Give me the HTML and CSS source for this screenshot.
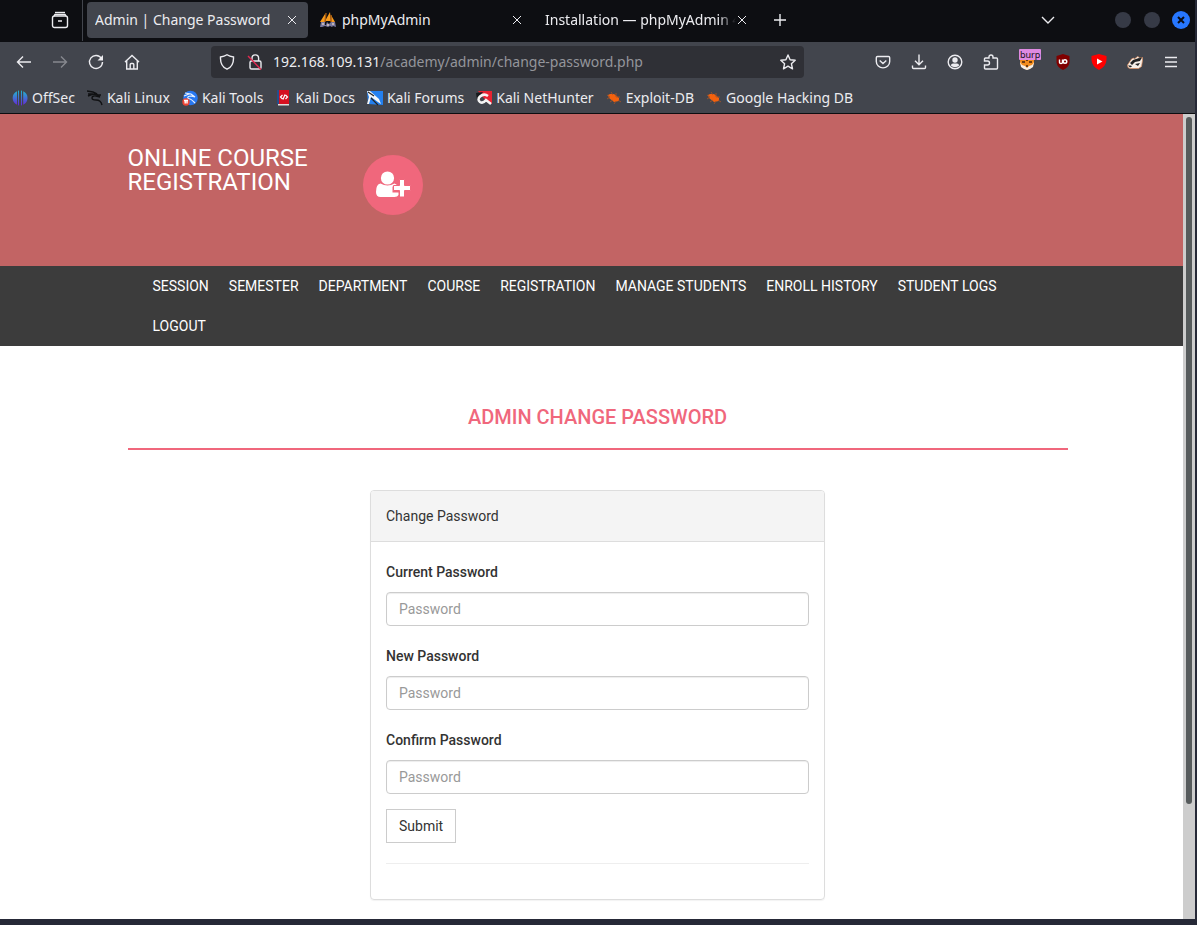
FILE: index.html
```html
<!DOCTYPE html>
<html lang="en">
<head>
<meta charset="utf-8">
<title>Admin | Change Password</title>
<link rel="stylesheet" href="styles.css">
</head>
<body>
<div class="window">
  <header class="browser">
    <div class="tabbar">
      <button class="recent" aria-label="View recent tabs"><svg class="icon" viewBox="0 0 18 18"><path d="M4 1.500h10"/><rect x="1.500" y="5" width="15" height="11.500" rx="2"/><path d="M3 5l1-1.500h10l1 1.500M7 10h4"/></svg></button>
      <div class="tab active"><span class="tab-title">Admin | Change Password</span><button class="close" aria-label="Close tab"><svg viewBox="0 0 10 10"><path d="M1 1l8 8M9 1l-8 8"/></svg></button></div>
      <div class="tab">
        <svg class="favicon" viewBox="0 0 16 16"><path d="M5 2v8H0zM10 0l1 9H5zM11 3l4 7h-4z" fill="#f89b1c"/><path d="M6 1L5 10M11 3v7" stroke="#a75c12" fill="none"/><path d="M0 15l1-5h4v3h1l1-3 2 2 2-2h4l1 5-3-1-1 1-2-1-2 1-3-1-3 1z" fill="#77779e"/><path d="M2 12h2M7 13h2M12 12h2" stroke="#d9c7bb" fill="none"/></svg>
        <span class="tab-title">phpMyAdmin</span><button class="close" aria-label="Close tab"><svg viewBox="0 0 10 10"><path d="M1 1l8 8M9 1l-8 8"/></svg></button></div>
      <div class="tab"><span class="tab-title fade">Installation — phpMyAdmin 4</span><button class="close" aria-label="Close tab"><svg viewBox="0 0 10 10"><path d="M1 1l8 8M9 1l-8 8"/></svg></button></div>
      <button class="newtab" aria-label="New tab"><svg viewBox="0 0 12 12"><path d="M6 0v12M0 6h12"/></svg></button>
      <button class="alltabs" aria-label="List all tabs"><svg viewBox="0 0 14 8"><path d="M1 1l6 6 6-6"/></svg></button>
      <div class="controls">
        <button class="dot" aria-label="Minimize"></button>
        <button class="dot" aria-label="Maximize"></button>
        <button class="dot dot-close" aria-label="Close"><svg viewBox="0 0 8 8"><path d="M1 1l6 6M7 1L1 7"/></svg></button>
      </div>
    </div>
    <div class="toolbar">
      <div class="nav-buttons">
        <button aria-label="Back"><svg class="icon" viewBox="0 0 16 16"><path d="M15 8H1.500M7 2.500L1.500 8 7 13.500"/></svg></button>
        <button class="disabled" aria-label="Forward" disabled><svg class="icon" viewBox="0 0 16 16"><path d="M1 8h13.500M9 2.500L14.500 8 9 13.500"/></svg></button>
        <button aria-label="Reload"><svg class="icon" viewBox="0 0 16 16"><path d="M13.500 4.500A6.500 6.500 0 1 0 14.500 8"/><path d="M15 1v5.500H9.500z" fill="currentColor" stroke="none"/></svg></button>
        <button aria-label="Home"><svg class="icon" viewBox="0 0 16 16"><path d="M1 8l7-6.500L15 8M2.700 6.500V15h10.600V6.500M6.200 15v-4.500q0-1 1-1h1.600q1 0 1 1V15"/></svg></button>
      </div>
      <div class="urlbar">
        <svg class="icon" viewBox="0 0 16 16"><path d="M8 .8c2 1.400 4.500 2 6.500 2.200.3 5.500-1.500 10-6.500 12.200C3 13 1.200 8.500 1.500 3 3.500 2.800 6 2.200 8 .800z"/></svg>
        <svg class="icon" viewBox="0 0 16 16"><rect x="3" y="7" width="11" height="8" rx="1.500"/><path d="M5 7V4.200a3.300 3.300 0 0 1 6.600 0V7"/><path d="M1 2l13 13.500" stroke="#e22850"/></svg>
        <p class="url"><span>192.168.109.131</span>/academy/admin/change-password.php</p>
        <svg class="icon" viewBox="0 0 16 16"><path d="M8 1l2.100 4.700 5.100.5-3.800 3.500 1.100 5.100L8 12.200l-4.500 2.600 1.100-5.100L.8 6.200l5.100-.5z" stroke-linejoin="round"/></svg>
      </div>
      <div class="extensions">
        <button aria-label="Pocket"><svg class="icon" viewBox="0 0 16 16"><path d="M2.500 2.500h11q1.200 0 1.200 1.200V7.500a6.700 6.400 0 0 1-13.400 0V3.700q0-1.200 1.200-1.200zM4.700 6.500L8 9.500l3.300-3"/></svg></button>
        <button aria-label="Downloads"><svg class="icon" viewBox="0 0 16 16"><path d="M8 .5v10M4 6.800l4 4 4-4M1.500 11.500v2q0 1 1 1h11q1 0 1-1v-2"/></svg></button>
        <button aria-label="Account"><svg class="icon" viewBox="0 0 16 16"><circle cx="8" cy="8" r="6.800"/><circle cx="8" cy="6" r="2.700" fill="currentColor" stroke="none"/><path d="M3.800 11.500Q4.200 9.500 6 9.500h4q1.800 0 2.200 2A6 6 0 0 1 3.800 11.500z" fill="currentColor" stroke="none"/></svg></button>
        <button aria-label="Extensions"><svg class="icon" viewBox="0 0 16 16"><path d="M1.500 7V5q0-1 1-1H6V3a2 2 0 0 1 4 0v1h3.500q1 0 1 1v9q0 1-1 1h-11q-1 0-1-1v-3h3a2 2 0 0 0 0-4z"/></svg></button>
        <button class="badged" aria-label="Proxy switcher"><svg class="icon solid" viewBox="0 0 16 16"><path d="M1 4l3 1 4-1 4 1 3-1v6l-3 4-4 2-4-2-3-4z" fill="#f28c1c"/><path d="M1 8l2 3 3 1 2 2 2-2 3-1 2-3-1 5-3 2-3 1-3-1-3-2z" fill="#f5eee5"/><path d="M7 5h2v2H7zM3 7h3v2H3zM10 7h3v2h-3zM7 11h2v2H7z" fill="#703d10"/></svg><span class="badge">burp</span></button>
        <button aria-label="uBlock Origin"><svg class="icon solid" viewBox="0 0 16 16"><path d="M8 0l6.500 2v6.500Q14 13 8 16 2 13 1.500 8.500V2z" fill="#800000"/><path d="M4.500 5.500v3q0 1 1.500 1t1.500-1v-3" stroke="#fff" fill="none"/><circle cx="10" cy="7.500" r="1.800" stroke="#fff" fill="none"/></svg></button>
        <button aria-label="Video blocker"><svg class="icon solid" viewBox="0 0 16 16"><path d="M8 0l7.500 2v4Q15 12.500 8 16 1 12.500.5 6V2z" fill="#f00"/><path d="M6 4.500l5.500 3L6 10.500z" fill="#fff"/></svg></button>
        <button aria-label="Privacy Badger"><svg class="icon solid" viewBox="0 0 16 16"><path d="M.5 11l4-6 2-1 1 1 3-2.500 2 1h3v3l-1 6-3 2H3l-2-1z" fill="#f7efe8" stroke="#dc8c5c" stroke-width=".7"/><path d="M3 9l3-3 6-2 2 1-1 2-5 1-3 3zM1 11.500h3l1 1-2 1zM8 10l5-1-2 3zM12 3.500l3 0-1 2z" fill="#222"/></svg></button>
        <button aria-label="Menu"><svg class="icon" viewBox="0 0 16 16"><path d="M2 3.500h12M2 8h12M2 12.500h12"/></svg></button>
      </div>
    </div>
    <nav class="bookmarks" aria-label="Bookmarks">
      <a href="#"><svg viewBox="0 0 16 16"><defs><linearGradient id="g" x2="0" y2="1"><stop stop-color="#20b8cf"/><stop offset="1" stop-color="#6626d9"/></linearGradient></defs><path d="M5 1.200v13.600A7.500 7.500 0 0 1 5 1.200zM7 .5v15l-1-.3V.8zM9 .5v15l1-.3V.8zM11.200 1.200v13.600a7.500 7.500 0 0 0 0-13.600z" fill="url(#g)"/></svg>OffSec</a>
      <a href="#"><svg viewBox="0 0 16 16"><path d="M0 1l6 1 4 2M1 4l5 0M1 6l5-2 4 .5 3 2.500-4-1Q5 5.500 5 8q0 2 4 2 5 0 6 5M10 5l4 0" fill="none" stroke="#101113" stroke-width="1.400"/></svg>Kali Linux</a>
      <a href="#"><svg viewBox="0 0 16 16"><circle cx="8.500" cy="8" r="7.300" fill="#2878f0"/><path d="M3 3l6 1 4 3-4-1q-4 0-3 2.500 3 0 7 4.500M2 6l5-2" fill="none" stroke="#e8f2ff" stroke-width="1.200"/><circle cx="4" cy="12" r="3.700" fill="#e43"/><path d="M2 10.500h4M3.200 10.500v3M5 10.500v3" stroke="#fff"/></svg>Kali Tools</a>
      <a href="#"><svg viewBox="0 0 16 16"><path d="M2 0h12v14H2z" fill="#d51020"/><path d="M2 0h2v14H2z" fill="#254d8c"/><path d="M3 14h11v1.500H3z" fill="#ddd"/><path d="M7.500 5L5.500 7l2 2M10.500 5l2 2-2 2M10 4.500L8 9.500" stroke="#fff" fill="none" stroke-width="1.200"/></svg>Kali Docs</a>
      <a href="#"><svg viewBox="0 0 16 16"><path d="M0 1h16v14L1 14z" fill="#2380ef"/><path d="M0 1h3l9 8 2 5-3-2-7-5-2 7-2 0 2-7z" fill="#f3f5f7"/><path d="M1 2l6 4M4 8l4 4 3 3" stroke="#222" stroke-width="1.200" fill="none"/></svg>Kali Forums</a>
      <a href="#"><svg viewBox="0 0 16 16"><path d="M2 1h14v13l-5-2z" fill="#e92332"/><path d="M0 3l7-1-6 8z" fill="#17191c"/><path d="M12 6Q8 3 4 6.500q-3 3 0 5.500 3 2 6-2l5 4" fill="none" stroke="#f4f4f4" stroke-width="2.500"/></svg>Kali NetHunter</a>
      <a href="#"><svg viewBox="0 0 16 16"><path d="M2 5l2-1 4 0 5 4 0 3-5 1-5-4z" fill="#f4610d"/><path d="M1 5l3 2-3 2M5 2l2 3M10 3v4l4 0M4 12l3-2M8 14l2-3M12 10l3 2" fill="none" stroke="#a95427" stroke-width=".8"/></svg>Exploit-DB</a>
      <a href="#"><svg viewBox="0 0 16 16"><path d="M2 5l2-1 4 0 5 4 0 3-5 1-5-4z" fill="#f4610d"/><path d="M1 5l3 2-3 2M5 2l2 3M10 3v4l4 0M4 12l3-2M8 14l2-3M12 10l3 2" fill="none" stroke="#a95427" stroke-width=".8"/></svg>Google Hacking DB</a>
    </nav>
  </header>

  <div class="viewport">
    <div class="page-header">
      <div class="container brand-row">
        <a class="brand" href="#">ONLINE COURSE REGISTRATION</a>
        <div class="avatar"><svg viewBox="0 0 36 28"><circle cx="12.500" cy="7" r="6.600" fill="#fff"/><path d="M5.500 12.500q3.500 2 7 2t7-2q2 .3 3.300 3H17.500v6h6v2.500q-1 2-4 2h-14q-4.500 0-4.500-5 0-8 4.500-8.500z" fill="#fff"/><path d="M24.500 8.500h5v6h6v5h-6v6.500h-5v-6.500h-6v-5h6z" fill="#fff" stroke="#f0677c"/></svg></div>
      </div>
    </div>
    <nav class="menu-section" aria-label="Admin">
      <ul class="container menu">
        <li><a href="#">SESSION</a></li><li><a href="#">SEMESTER</a></li><li><a href="#">DEPARTMENT</a></li><li><a href="#">COURSE</a></li><li><a href="#">REGISTRATION</a></li><li><a href="#">MANAGE STUDENTS</a></li><li><a href="#">ENROLL HISTORY</a></li><li><a href="#">STUDENT LOGS</a></li><li><a href="#">LOGOUT</a></li>
      </ul>
    </nav>
    <main class="container content">
      <h1>ADMIN CHANGE PASSWORD</h1>
      <section class="panel">
        <h2>Change Password</h2>
        <form class="panel-body">
          <div class="field"><label for="current">Current Password</label><input id="current" type="password" placeholder="Password"></div>
          <div class="field"><label for="new">New Password</label><input id="new" type="password" placeholder="Password"></div>
          <div class="field"><label for="confirm">Confirm Password</label><input id="confirm" type="password" placeholder="Password"></div>
          <button class="submit" type="submit">Submit</button>
          <hr>
        </form>
      </section>
    </main>
    <div class="scrollbar"><div class="thumb"></div></div>
  </div>
</div>
</body>
</html>
```
FILE: styles.css
```css
* { box-sizing: border-box; }
body { margin: 0; background: #262937; }
button { background: none; border: 0; padding: 0; color: inherit; font: inherit; display: flex; align-items: center; justify-content: center; }
a { color: inherit; text-decoration: none; }
svg { display: block; flex: none; }
.window { min-height: 100vh; display: flex; flex-direction: column; padding: 0 2px 6px 0; }

/* Browser chrome */
.browser { font: 14px/20px "Noto Sans", sans-serif; color: #ececf0; background: #42454d; border-bottom: 1px solid #0c0d10; }
.browser svg { fill: none; stroke: currentColor; stroke-width: 1.4; }
.browser .icon { width: 16px; height: 16px; }
.browser .solid { stroke: none; }
.tabbar { height: 42px; background: #0d0e12; display: flex; align-items: center; padding-bottom: 3px; }
.recent { width: 83px; height: 42px; padding-left: 37px; border-right: 1px solid #42454d; margin-right: 4px; }
.recent .icon { width: 18px; height: 18px; }
.tab { height: 36px; width: 225px; display: flex; align-items: center; padding: 0 8px; border-radius: 4px; white-space: nowrap; }
.tab:not(.active) { padding: 0 8px 0 12px; }
.tab.active { background: #42454d; width: 221px; }
.tab-title { flex: 1; min-width: 0; overflow: hidden; }
.fade { margin-right: -8px; mask-image: linear-gradient(to right, #000 88%, transparent 97%); }
.close { width: 16px; height: 16px; }
.close svg { width: 10px; height: 10px; stroke-width: 1; }
.browser .favicon { width: 16px; height: 16px; stroke: none; margin-right: 6px; }
.newtab { width: 36px; height: 36px; margin-left: 4px; }
.newtab svg { width: 12px; height: 12px; }
.alltabs { width: 36px; height: 36px; margin-left: auto; }
.alltabs svg { width: 14px; height: 8px; }
.controls { display: flex; align-items: center; gap: 13px; margin: 0 5px 0 49px; }
.dot { width: 16px; height: 16px; border-radius: 50%; background: #363a46; }
.dot-close { width: 18px; height: 18px; background: #2777ff; color: #0b0d14; margin-left: -1px; }
.dot-close svg { width: 8px; height: 8px; stroke-width: 2; }
.toolbar { height: 40px; display: flex; align-items: center; padding: 0 16px; }
.nav-buttons { display: flex; gap: 20px; }
.disabled { opacity: .4; }
.urlbar { flex: 1; max-width: 593px; height: 32px; margin-left: 71px; background: #2f3036; border-radius: 4px; display: flex; align-items: center; gap: 12px; padding: 0 8px; }
.url { flex: 1; margin: 0 0 0 -2px; color: #94959b; white-space: nowrap; overflow: hidden; }
.url span { color: #ececf0; }
.extensions { display: flex; gap: 20px; margin-left: auto; }
.badged { position: relative; }
.badge { position: absolute; left: 0; top: -5px; height: 11px; padding: 0 1px; background: #df8ae2; color: #15141a; font-size: 9px; line-height: 11px; border-radius: 1px; }
.bookmarks { height: 31px; display: flex; align-items: center; gap: 12px; padding: 0 12px; white-space: nowrap; }
.bookmarks a { display: flex; align-items: center; gap: 4px; }
.bookmarks svg { width: 16px; height: 16px; stroke: none; }

/* Web page */
.viewport { position: relative; flex: 1; background: #fff; font: 14px/30px Roboto, sans-serif; color: #333; }
.container { width: 100%; max-width: 970px; margin: 0 auto; padding: 0 15px; }
.page-header { background: #c26464; }
.brand-row { display: flex; gap: 20px; padding-top: 32px; min-height: 152px; }
.brand { width: 215px; color: #fff; font-size: 24px; line-height: 24px; }
.avatar { width: 60px; height: 60px; margin-top: 9px; border-radius: 50%; background: #f0677c; display: flex; align-items: center; justify-content: center; }
.avatar svg { width: 36px; height: 28px; }
.menu-section { background: #3c3c3c; color: #fff; }
.menu { list-style: none; display: flex; flex-wrap: wrap; padding: 0 30px; }
.menu a { display: block; padding: 0 10px; line-height: 40px; }
h1 { margin: 56px 0 40px; padding-bottom: 16px; border-bottom: 2px solid #f0677c; color: #f0677c; font-size: 20px; line-height: 30px; font-weight: 500; text-align: center; }
.content { display: flow-root; padding-bottom: 19px; }
.panel { max-width: 455px; margin: 0 auto; border: 1px solid #ddd; border-radius: 4px; box-shadow: 0 1px 1px rgba(0, 0, 0, .05); }
h2 { margin: 0; padding: 10px 15px; border-bottom: 1px solid #ddd; border-radius: 3px 3px 0 0; background: #f4f4f4; font-size: 14px; font-weight: 400; }
.panel-body { padding: 15px; }
.field { margin-bottom: 15px; }
label { display: block; margin-bottom: 5px; font-weight: 500; }
input { display: block; width: 100%; height: 34px; padding: 6px 12px; border: 1px solid #ccc; border-radius: 4px; font: 14px/20px Roboto, sans-serif; color: #555; box-shadow: inset 0 1px 1px rgba(0, 0, 0, .075); }
input::placeholder { color: #999; }
.submit { height: 34px; padding: 6px 12px; border: 1px solid #ccc; background: #fff; line-height: 20px; }
hr { margin: 20px 0; border: 0; border-top: 1px solid #eee; }
.scrollbar { position: absolute; top: 0; right: 0; bottom: 0; width: 12px; padding: 3px; background: #cdcdcd; }
.thumb { height: 86%; border-radius: 3px; background: #565b5c; }
```
